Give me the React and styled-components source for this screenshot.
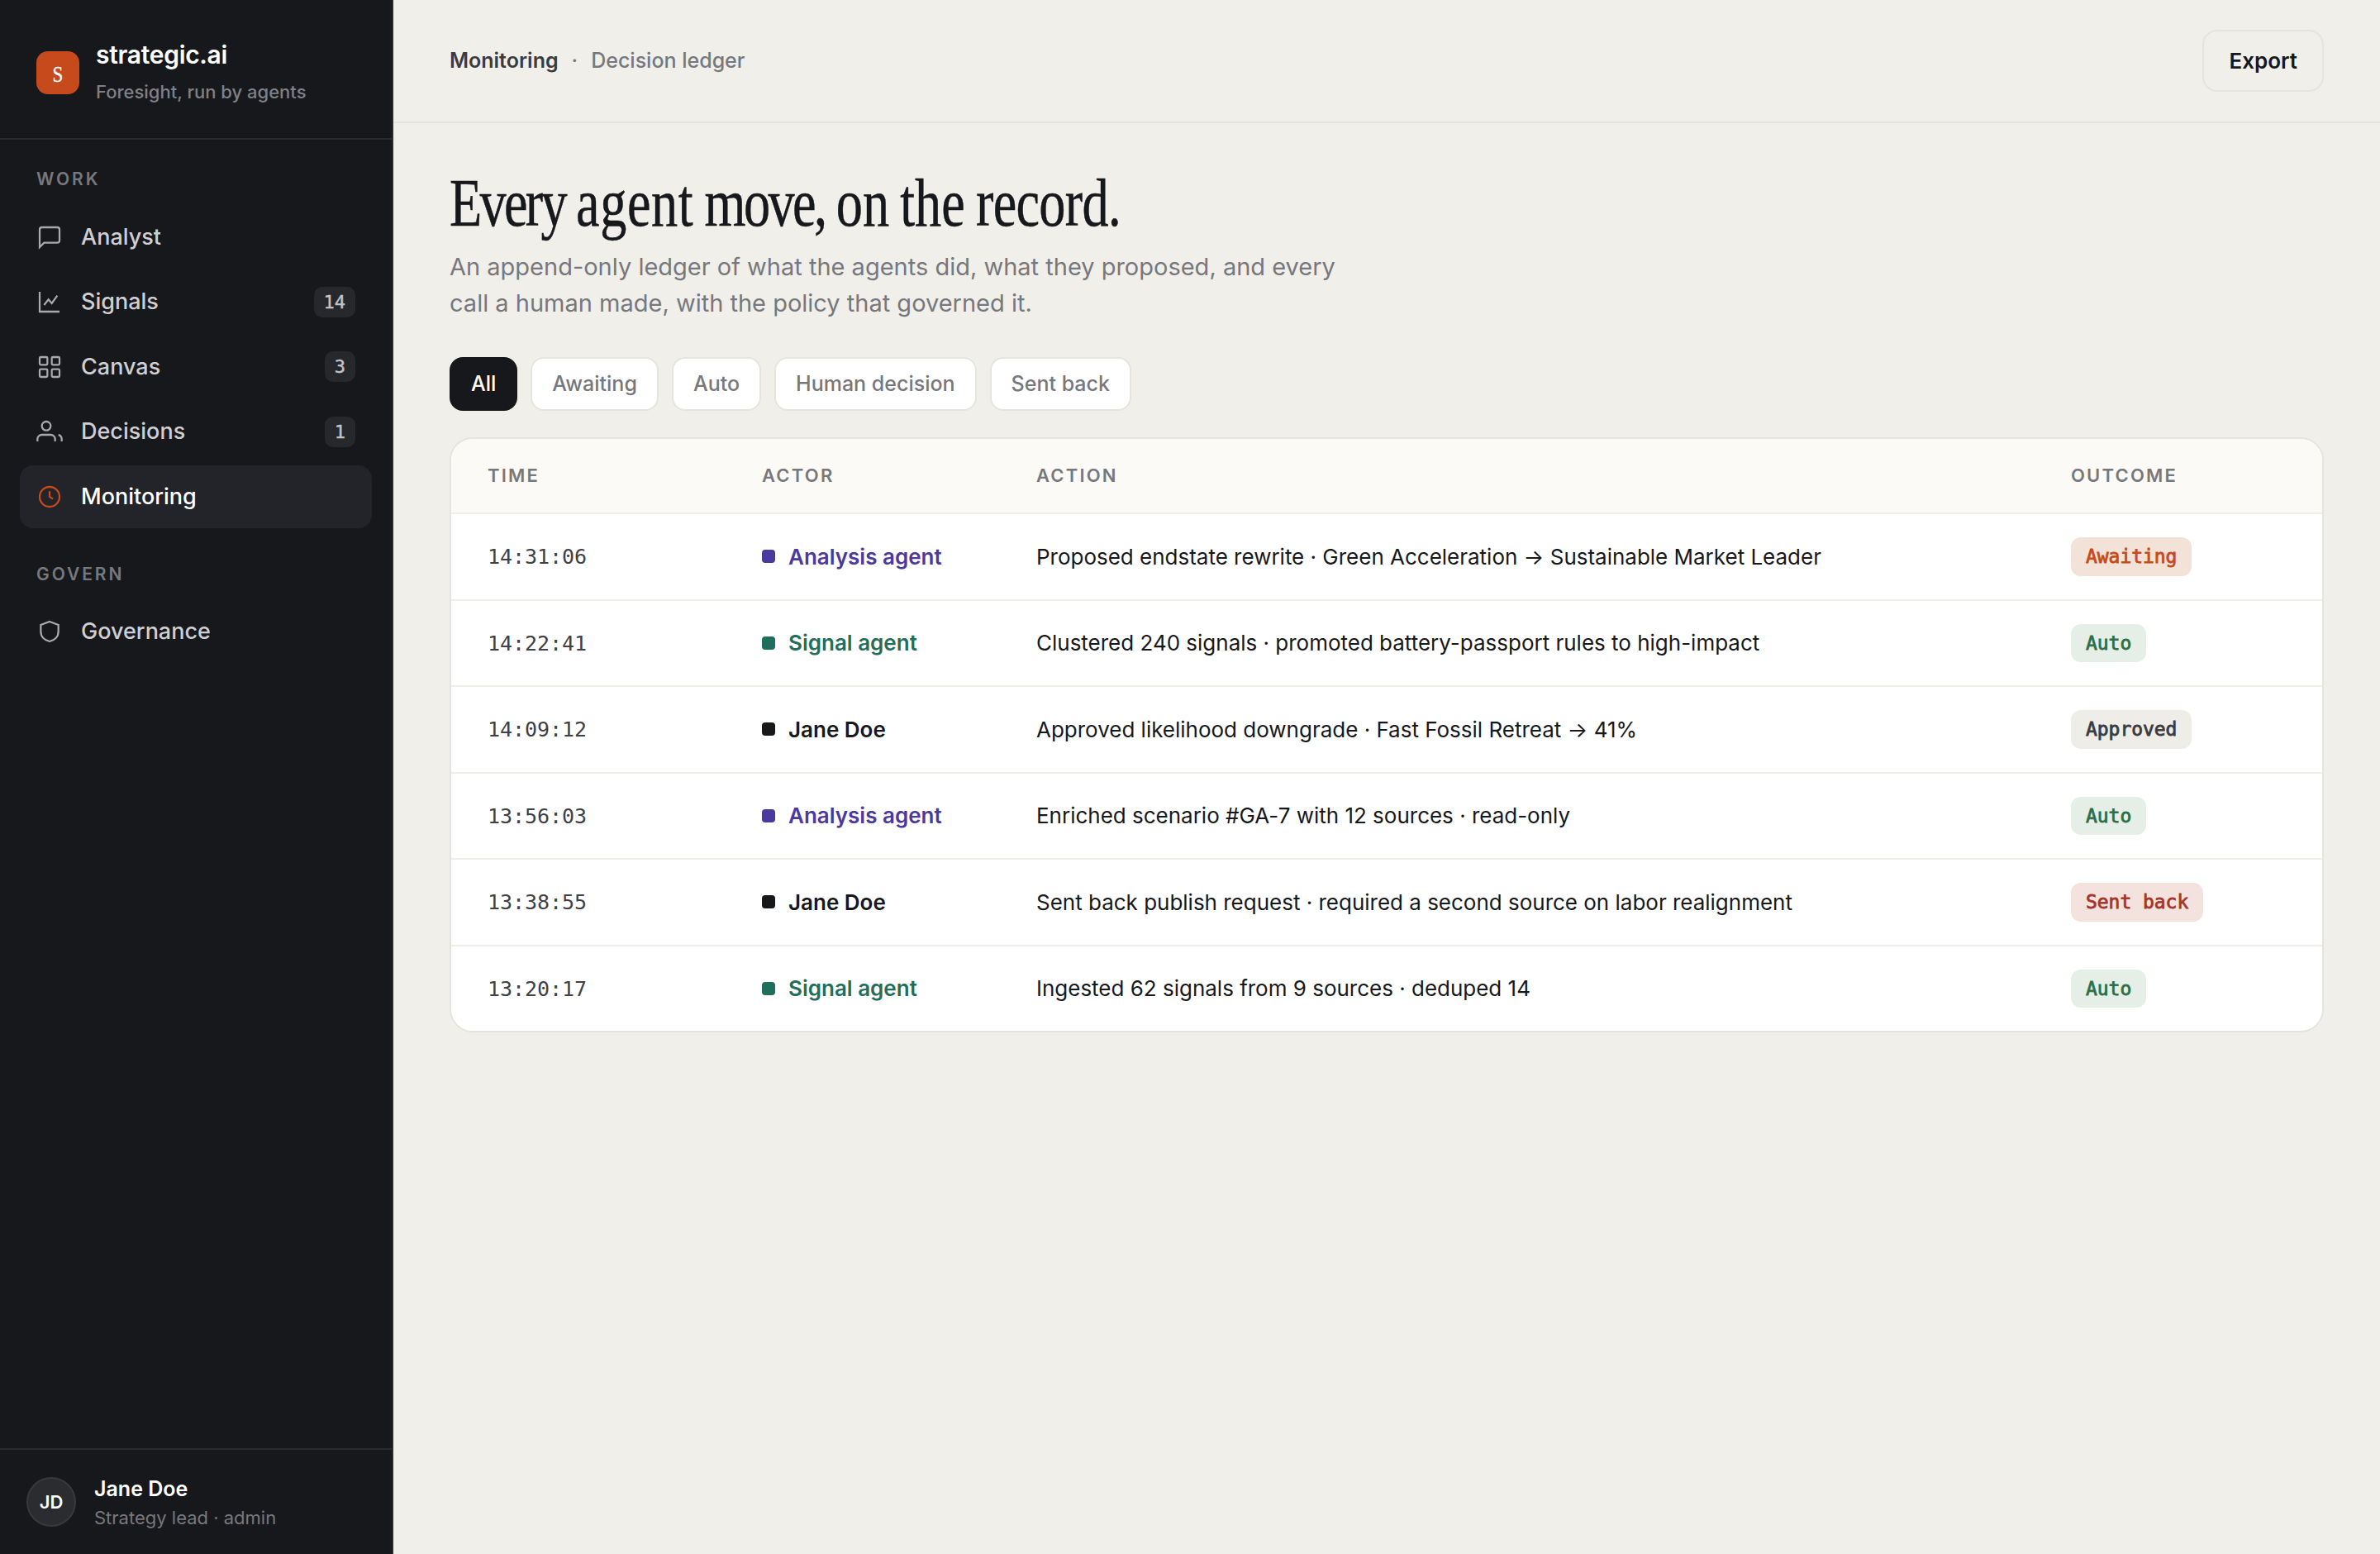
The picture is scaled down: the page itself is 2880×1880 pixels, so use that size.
import React from "react";
import styled, { createGlobalStyle } from "styled-components";

const sans = `Inter, "Liberation Sans", sans-serif`;
const mono = `"DejaVu Sans Mono", "Liberation Mono", monospace`;
const serif = `"Liberation Serif", serif`;

const c = {
  ink: "#17181c",
  ink2: "#3a3b40",
  mute: "#77787e",
  paper: "#f0efea",
  line: "#e5e4df",
  rowLine: "#efeee9",
  accent: "#c64a1c",
};

const Global = createGlobalStyle`
  * { box-sizing: border-box; }
  body { margin: 0; background: ${c.paper}; }
`;

const Shell = styled.div`
  display: flex;
  width: 2880px;
  height: 1880px;
  overflow: hidden;
  background: ${c.paper};
  color: ${c.ink};
  font-family: ${sans};
  line-height: 1.5;
`;

const Sidebar = styled.aside`
  display: flex;
  flex-direction: column;
  width: 476px;
  flex: none;
  background: ${c.ink};
  border-right: 2px solid #2a2b2f;
`;

const Brand = styled.div`
  display: flex;
  align-items: center;
  gap: 20px;
  height: 169px;
  padding: 44px 44px 36px;
  border-bottom: 2px solid #2a2b2f;
`;

const Mark = styled.div`
  display: flex;
  align-items: center;
  justify-content: center;
  width: 52px;
  height: 52px;
  border-radius: 14px;
  background: ${c.accent};
  color: #fff;
  font: 400 28px/1 ${serif};
`;

const MarkLetter = styled.span`
  transform: scaleX(0.82);
  padding-top: 5px;
  -webkit-text-stroke: 0.4px currentColor;
`;

const BrandText = styled.div`
  display: flex;
  flex-direction: column;
  gap: 6px;
  height: 87px;
`;

const BrandName = styled.div`
  color: #fff;
  font-size: 30px;
  font-weight: 600;
  letter-spacing: -0.01em;
`;

const BrandTag = styled.div`
  color: #808185;
  font-size: 22px;
  font-weight: 500;
  white-space: nowrap;
`;

const Nav = styled.nav`
  flex: 1;
  display: flex;
  flex-direction: column;
  gap: 39.5px;
  padding: 32px 24px;
`;

const Group = styled.div`
  display: flex;
  flex-direction: column;
  gap: 2px;
`;

const GroupLabel = styled.div`
  padding: 0 20px 14px;
  color: #77787c;
  font-size: 21px;
  font-weight: 600;
  letter-spacing: 0.14em;
`;

const Item = styled.a`
  display: flex;
  align-items: center;
  gap: 22px;
  height: 76.5px;
  padding: 0 20px;
  border-radius: 16px;
  background: ${(p) => (p.$active ? "#232429" : "transparent")};
  color: ${(p) => (p.$active ? "#fff" : "#cfcfd2")};
  font-size: 27px;
  font-weight: 500;

  svg {
    flex: none;
    color: ${(p) => (p.$active ? c.accent : "#a8a9ac")};
  }
`;

const Count = styled.span`
  margin-left: auto;
  padding: 2px 12px;
  border-radius: 10px;
  background: #27282c;
  color: #c4c4c7;
  font: 400 22px/33px ${mono};
  -webkit-text-stroke: 0.4px currentColor;
`;

const User = styled.div`
  display: flex;
  align-items: center;
  gap: 22px;
  height: 128px;
  padding: 0 32px;
  border-top: 2px solid #2a2b2f;
`;

const Avatar = styled.div`
  display: flex;
  align-items: center;
  justify-content: center;
  width: 60px;
  height: 60px;
  border: 2px solid #38393d;
  border-radius: 50%;
  background: #2b2c30;
  color: #fff;
  font-size: 22px;
  font-weight: 600;
`;

const UserName = styled.div`
  color: #fff;
  font-size: 25px;
  font-weight: 600;
  line-height: 38px;
`;

const UserRole = styled.div`
  color: #77787c;
  font-size: 22px;
`;

const Main = styled.main`
  flex: 1;
  min-width: 0;
`;

const Topbar = styled.header`
  display: flex;
  align-items: center;
  justify-content: space-between;
  height: 149px;
  padding: 0 68px;
  border-bottom: 2px solid ${c.line};
`;

const Crumbs = styled.div`
  display: flex;
  gap: 16px;
  color: ${c.mute};
  font-size: 25px;
  font-weight: 500;

  strong {
    color: ${c.ink2};
    font-weight: 600;
  }
`;

const Export = styled.button`
  height: 75px;
  padding: 0 30px;
  border: 2px solid ${c.line};
  border-radius: 18px;
  background: transparent;
  color: ${c.ink};
  font: 600 26px/39px ${sans};
`;

const Content = styled.section`
  padding: 52px 68px;
`;

const Title = styled.h1`
  width: max-content;
  margin: 0;
  font: 400 83px/88px ${serif};
  letter-spacing: -0.02em;
  word-spacing: -2px;
  white-space: nowrap;
  transform: scaleX(0.774);
  transform-origin: 0 50%;
  -webkit-text-stroke: 0.5px currentColor;
`;

const Word = styled.span`
  letter-spacing: ${(p) => p.$track}px;
`;

const Lede = styled.p`
  width: 1120px;
  margin: 12px 0 44px;
  color: ${c.mute};
  font-size: 29px;
  line-height: 43.5px;
`;

const Filters = styled.div`
  display: flex;
  gap: 16px;
  margin-bottom: 32px;
`;

const Chip = styled.button`
  height: 65px;
  padding: 0 24px;
  border: 2px solid ${(p) => (p.$on ? c.ink : c.line)};
  border-radius: 16px;
  background: ${(p) => (p.$on ? c.ink : "#fff")};
  color: ${(p) => (p.$on ? "#fff" : c.mute)};
  font: 500 25px/37px ${sans};
`;

const Card = styled.div`
  overflow: hidden;
  border: 2px solid ${c.line};
  border-radius: 28px;
  background: #fff;
`;

const Row = styled.div`
  display: grid;
  grid-template-columns: 300px 300px 1fr 260px;
  gap: 32px;
  align-items: center;
  height: 104.5px;
  padding: 0 44px;
  border-bottom: 2px solid ${c.rowLine};
  font-size: 26px;

  &:last-child {
    height: 102.5px;
    border-bottom: 0;
  }
`;

const HeadRow = styled(Row)`
  height: 91px;
  background: #fbfaf7;
  color: ${c.mute};
  font-size: 22px;
  font-weight: 600;
  letter-spacing: 0.1em;
`;

const Time = styled.span`
  padding-top: 2px;
  color: #404146;
  font: 400 25px/38px ${mono};
  letter-spacing: -0.05px;
`;

const Actor = styled.span`
  display: flex;
  align-items: center;
  gap: 16px;
  color: ${(p) => p.$tone};
  font-weight: 600;

  &::before {
    content: "";
    width: 16px;
    height: 16px;
    border-radius: 4px;
    background: currentColor;
  }
`;

const Action = styled.span`
  letter-spacing: -0.01px;
  white-space: nowrap;
`;

const Badge = styled.span`
  justify-self: start;
  padding: 6px 18px;
  border-radius: 12px;
  background: ${(p) => p.$bg};
  color: ${(p) => p.$fg};
  font: 400 23px/34.5px ${mono};
  letter-spacing: -0.05px;
  -webkit-text-stroke: 0.8px currentColor;
  white-space: pre;
`;

const Icon = ({ children }) => (
  <svg width="32" height="32" viewBox="0 0 24 24" fill="none" stroke="currentColor" strokeWidth="1.7">
    {children}
  </svg>
);

const icons = {
  chat: <path d="M21 15a2 2 0 0 1-2 2H7l-4 4V5a2 2 0 0 1 2-2h14a2 2 0 0 1 2 2z" />,
  chart: <path d="M3 3v18h18M7 15l4-5 3 3.5 5-7" />,
  grid: (
    <>
      <rect x="3" y="3" width="7" height="7" rx="1" />
      <rect x="14" y="3" width="7" height="7" rx="1" />
      <rect x="3" y="14" width="7" height="7" rx="1" />
      <rect x="14" y="14" width="7" height="7" rx="1" />
    </>
  ),
  users: (
    <>
      <path d="M17 21v-2a4 4 0 0 0-4-4H5a4 4 0 0 0-4 4v2M23 21v-2a4 4 0 0 0-3-3.87" />
      <circle cx="9" cy="7" r="4" />
    </>
  ),
  clock: (
    <>
      <circle cx="12" cy="12" r="9" />
      <path d="M12 7v5l3 2" />
    </>
  ),
  shield: <path d="M12 3l8 3v6c0 4.6-3.2 7.9-8 9-4.8-1.1-8-4.4-8-9V6z" />,
};

const work = [
  { icon: "chat", label: "Analyst" },
  { icon: "chart", label: "Signals", count: 14 },
  { icon: "grid", label: "Canvas", count: 3 },
  { icon: "users", label: "Decisions", count: 1 },
  { icon: "clock", label: "Monitoring", active: true },
];
const govern = [{ icon: "shield", label: "Governance" }];

const headline = [
  ["Every", -3.5],
  ["agent", 0.8],
  ["move,", -3.3],
  ["on", 0],
  ["the", 0],
  ["record.", -0.9],
];

const actors = { "Analysis agent": "#4a3a9e", "Signal agent": "#1f6f5c", "Jane Doe": c.ink };
const outcomes = {
  Awaiting: ["#f3e2d8", "#c64a1c"],
  Auto: ["#e6efe7", "#2a6f49"],
  Approved: ["#eeede8", "#3a3b40"],
  "Sent back": ["#f3e2de", "#a5352a"],
};
const rows = [
  ["14:31:06", "Analysis agent", "Proposed endstate rewrite · Green Acceleration → Sustainable Market Leader", "Awaiting"],
  ["14:22:41", "Signal agent", "Clustered 240 signals · promoted battery-passport rules to high-impact", "Auto"],
  ["14:09:12", "Jane Doe", "Approved likelihood downgrade · Fast Fossil Retreat → 41%", "Approved"],
  ["13:56:03", "Analysis agent", "Enriched scenario #GA-7 with 12 sources · read-only", "Auto"],
  ["13:38:55", "Jane Doe", "Sent back publish request · required a second source on labor realignment", "Sent back"],
  ["13:20:17", "Signal agent", "Ingested 62 signals from 9 sources · deduped 14", "Auto"],
];

const NavGroup = ({ label, items }) => (
  <Group>
    <GroupLabel>{label}</GroupLabel>
    {items.map((it) => (
      <Item key={it.label} $active={it.active}>
        <Icon>{icons[it.icon]}</Icon>
        {it.label}
        {it.count && <Count>{it.count}</Count>}
      </Item>
    ))}
  </Group>
);

export default function App() {
  return (
    <>
      <Global />
      <Shell>
        <Sidebar>
          <Brand>
            <Mark>
              <MarkLetter>S</MarkLetter>
            </Mark>
            <BrandText>
              <BrandName>strategic.ai</BrandName>
              <BrandTag>Foresight, run by agents</BrandTag>
            </BrandText>
          </Brand>
          <Nav>
            <NavGroup label="WORK" items={work} />
            <NavGroup label="GOVERN" items={govern} />
          </Nav>
          <User>
            <Avatar>JD</Avatar>
            <div>
              <UserName>Jane Doe</UserName>
              <UserRole>Strategy lead · admin</UserRole>
            </div>
          </User>
        </Sidebar>
        <Main>
          <Topbar>
            <Crumbs>
              <strong>Monitoring</strong>
              <span>·</span>
              <span>Decision ledger</span>
            </Crumbs>
            <Export>Export</Export>
          </Topbar>
          <Content>
            <Title>
              {headline.map(([word, track], i) => (
                <React.Fragment key={word}>
                  {i > 0 && " "}
                  <Word $track={track}>{word}</Word>
                </React.Fragment>
              ))}
            </Title>
            <Lede>
              An append-only ledger of what the agents did, what they proposed, and every call a human made, with the
              policy that governed it.
            </Lede>
            <Filters>
              {["All", "Awaiting", "Auto", "Human decision", "Sent back"].map((f, i) => (
                <Chip key={f} $on={i === 0}>
                  {f}
                </Chip>
              ))}
            </Filters>
            <Card>
              <HeadRow>
                <span>TIME</span>
                <span>ACTOR</span>
                <span>ACTION</span>
                <span>OUTCOME</span>
              </HeadRow>
              {rows.map(([time, actor, action, outcome]) => (
                <Row key={time}>
                  <Time>{time}</Time>
                  <Actor $tone={actors[actor]}>{actor}</Actor>
                  <Action>{action}</Action>
                  <Badge $bg={outcomes[outcome][0]} $fg={outcomes[outcome][1]}>
                    {outcome}
                  </Badge>
                </Row>
              ))}
            </Card>
          </Content>
        </Main>
      </Shell>
    </>
  );
}
